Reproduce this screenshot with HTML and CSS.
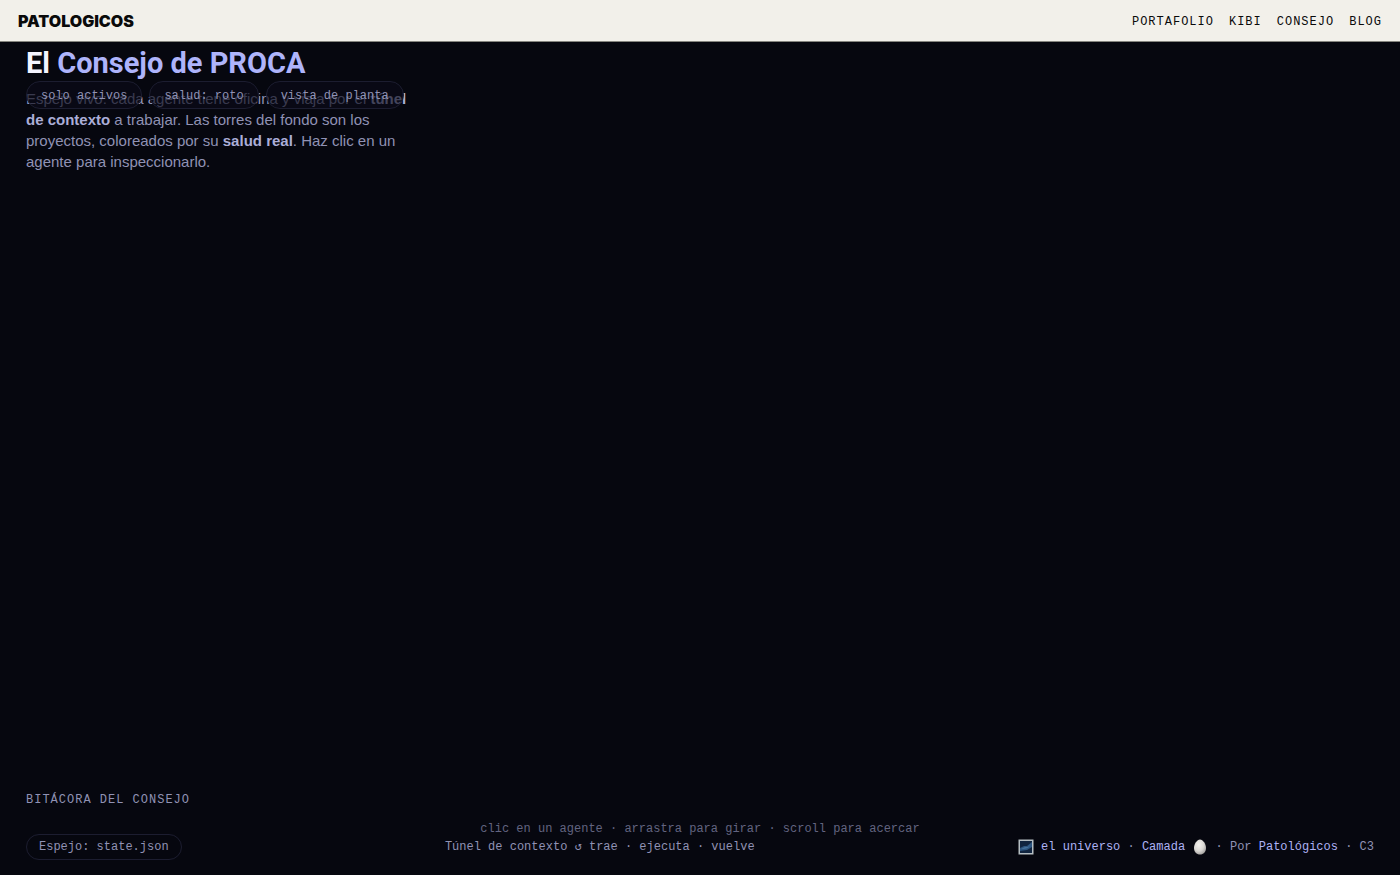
FILE: index.html
```html
<!DOCTYPE html>
<html lang="es">
<head>
    <meta charset="UTF-8">
    <meta name="viewport" content="width=device-width, initial-scale=1.0">
    <title>El Consejo de PROCA</title>
    <link rel="stylesheet" href="styles.css">
</head>
<body>
    <header class="topbar">
        <a class="brand" href="#">PATOLOGICOS</a>
        <nav class="nav">
            <a href="#portafolio">PORTAFOLIO</a>
            <a href="#kibi">KIBI</a>
            <a href="#consejo">CONSEJO</a>
            <a href="#blog">BLOG</a>
        </nav>
    </header>

    <main class="stage">
        <section class="intro">
            <h1>El <span>Consejo de PROCA</span></h1>
            <p>Espejo vivo: cada agente tiene oficina y viaja por el <b>túnel<br>de contexto</b> a trabajar. Las torres del fondo son los<br>proyectos, coloreados por su <b>salud real</b>. Haz clic en un<br>agente para inspeccionarlo.</p>
            <!-- Filtros sobre la escena -->
            <div class="filters">
                <button type="button" class="chip">solo activos</button>
                <button type="button" class="chip">salud: roto</button>
                <button type="button" class="chip">vista de planta</button>
            </div>
        </section>

        <section class="log">
            <h2>BITÁCORA DEL CONSEJO</h2>
        </section>
    </main>

    <p class="hint">clic en un agente · arrastra para girar · scroll para acercar</p>

    <footer class="bottom">
        <span class="source">Espejo: state.json</span>
        <span class="tunnel">Túnel de contexto ↺ trae · ejecuta · vuelve</span>
        <span class="credits">
            <a href="#universo"><svg class="emoji" viewBox="0 0 16 16" aria-hidden="true">
                <rect x="0.5" y="0.5" width="15" height="15" fill="#b4bdc2"/>
                <rect x="2" y="2" width="12" height="12" fill="#10243f"/>
                <path d="M2 9 L6 7 L9 7 L14 3 V8 L9 11 L2 12 Z" fill="#2c5580"/>
                <path d="M3 10 L7 8 L10 8 L13 5 L10 9 L6 10 Z" fill="#44709a"/>
            </svg> el universo</a> · <a href="#camada">Camada <svg class="emoji" viewBox="0 0 16 16" aria-hidden="true">
                <defs>
                    <radialGradient id="shell" cx="40%" cy="35%" r="70%">
                        <stop offset="0" stop-color="#f5f3ef"/>
                        <stop offset="0.6" stop-color="#d9d7d3"/>
                        <stop offset="1" stop-color="#a09e9c"/>
                    </radialGradient>
                </defs>
                <path d="M8 0.5 C11 0.5 14 5 14 9 C14 13 11.5 15.5 8 15.5 C4.5 15.5 2 13 2 9 C2 5 5 0.5 8 0.5 Z" fill="url(#shell)"/>
            </svg></a> · Por <a href="#patologicos">Patológicos</a> · C3
        </span>
    </footer>
</body>
</html>
```
FILE: styles.css
```css
* {
    margin: 0;
    padding: 0;
    box-sizing: border-box;
}

body {
    min-height: 100vh;
    display: flex;
    flex-direction: column;
    background: #06070f;
    color: #9092b4;
    font-family: 'Liberation Mono', monospace;
    font-size: 12px;
    line-height: 18px;
}

a {
    color: inherit;
    text-decoration: none;
}

.topbar {
    display: flex;
    justify-content: space-between;
    align-items: center;
    padding: 11px 18px 9px;
    background: #f2f0ea;
    border-bottom: 1px solid #85857f;
    color: #0a0a0a;
}

.brand {
    font-family: Inter, sans-serif;
    font-size: 16px;
    font-weight: 900;
    line-height: 21px;
}

.nav {
    display: flex;
    gap: 15px;
    letter-spacing: 1px;
}

.stage {
    flex: 1;
    display: flex;
    flex-direction: column;
    justify-content: space-between;
    padding: 0 26px;
}

.intro {
    position: relative;
    padding-top: 2px;
    font-family: 'Liberation Sans', sans-serif;
}

.intro h1 {
    color: #f4f4ff;
    font-family: Roboto, sans-serif;
    font-size: 29px;
    font-weight: 700;
    line-height: 38px;
}

.intro h1 span {
    color: #aeb4fb;
}

.intro p {
    padding-top: 6px;
    font-size: 15px;
    line-height: 21px;
}

.intro b {
    color: #abaed8;
}

.filters {
    position: absolute;
    top: 39px;
    left: 0;
    display: flex;
    gap: 7px;
}

.chip {
    padding: 5px 14px 3px;
    border: 1px solid #1c1d30;
    border-radius: 14px;
    background: rgba(10, 11, 24, 0.65);
    color: #9092b4;
    font-family: 'Liberation Mono', monospace;
    font-size: 12px;
    line-height: 18px;
}

.log h2 {
    padding-bottom: 11px;
    font-size: 12px;
    font-weight: 400;
    letter-spacing: 1px;
}

.hint {
    text-align: center;
    color: #626480;
}

.bottom {
    display: flex;
    justify-content: space-between;
    align-items: center;
    padding: 0 26px 15px;
    margin-top: -4px;
}

.source {
    padding: 3px 12px;
    border: 1px solid #1c1d30;
    border-radius: 14px;
}

.credits a {
    color: #adb2f4;
}

.emoji {
    width: 16px;
    height: 16px;
    vertical-align: middle;
}
```
